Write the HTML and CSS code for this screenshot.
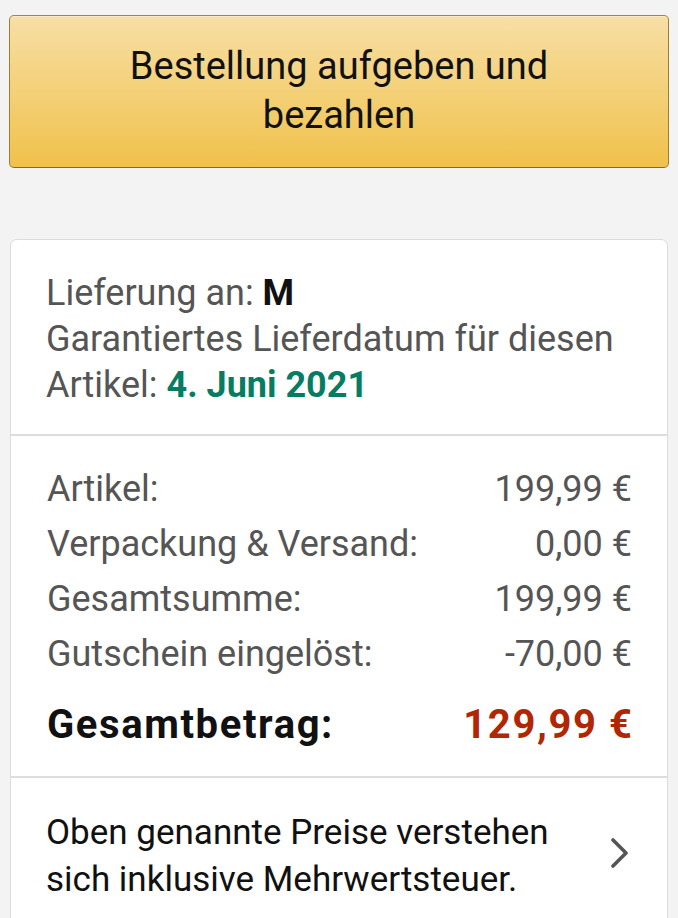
FILE: index.html
```html
<!DOCTYPE html>
<html lang="de">
<head>
<meta charset="utf-8">
<title>Bestellung</title>
<link rel="stylesheet" href="styles.css">
</head>
<body>
<main class="page">
  <button class="place-order" type="button">Bestellung aufgeben und bezahlen</button>

  <section class="card">
    <div class="delivery">
      <p class="line">Lieferung an: <strong class="name">M</strong></p>
      <p class="line">Garantiertes Lieferdatum für diesen Artikel: <strong class="date">4. Juni 2021</strong></p>
    </div>

    <div class="summary">
      <div class="row"><span>Artikel:</span><span>199,99 €</span></div>
      <div class="row"><span>Verpackung &amp; Versand:</span><span>0,00 €</span></div>
      <div class="row"><span>Gesamtsumme:</span><span>199,99 €</span></div>
      <div class="row"><span>Gutschein eingelöst:</span><span>-70,00 €</span></div>
      <div class="row total"><span>Gesamtbetrag:</span><span class="price">129,99 €</span></div>
    </div>

    <a class="vat" href="#">
      <span class="vat-text">Oben genannte Preise verstehen sich inklusive Mehrwertsteuer.</span>
      <svg class="chevron" viewBox="0 0 20 30" width="20" height="30" aria-hidden="true">
        <polyline points="3,2 16,15 3,28" fill="none" stroke="#555" stroke-width="3.6" stroke-linecap="round" stroke-linejoin="round"/>
      </svg>
    </a>
  </section>
</main>
</body>
</html>
```

FILE: styles.css
```css
html, body {
  margin: 0;
  padding: 0;
  background: #f3f3f3;
}

body {
  font-family: Roboto, "Liberation Sans", Arial, sans-serif;
  color: #111;
}

.page {
  display: flex;
  flex-direction: column;
  padding: 15px 9px 0 9px;
}

.place-order {
  display: block;
  width: 100%;
  margin: 0;
  padding: 26px 80px 27px;
  border: 1px solid;
  border-color: #a88734 #9c7e31 #846a29;
  border-radius: 5px;
  background: linear-gradient(to bottom, #f7dfa5, #f0c14b);
  box-shadow: inset 0 1px 0 rgba(255, 255, 255, 0.4);
  font-family: Roboto, "Liberation Sans", Arial, sans-serif;
  font-size: 38px;
  line-height: 49px;
  color: #111;
  text-align: center;
}

.card {
  margin: 71px 1px 0 1px;
  background: #fff;
  border: 1px solid #dcdcdc;
  border-radius: 7px;
  overflow: hidden;
}

.delivery {
  padding: 30px 35px 26px 35px;
  border-bottom: 2px solid #dddddd;
  font-size: 36px;
  line-height: 46px;
  color: #555;
}

.line {
  margin: 0;
}

.name {
  color: #111;
  font-weight: 700;
}

.date {
  color: #067d62;
  font-weight: 700;
}

.summary {
  padding: 26px 35px 24px 36px;
  border-bottom: 2px solid #dddddd;
  font-size: 36px;
  line-height: 55px;
  color: #555;
}

.row {
  display: flex;
  justify-content: space-between;
}

.row.total {
  margin-top: 15px;
  font-size: 40px;
  font-weight: 700;
  letter-spacing: 1.6px;
  color: #111;
}

.price {
  color: #b12704;
  margin-right: -1.6px;
}

.vat {
  display: flex;
  align-items: center;
  gap: 24px;
  padding: 31px 37px 32px 35px;
  text-decoration: none;
  color: #111;
}

.vat-text {
  flex: 1;
  font-size: 35px;
  line-height: 47px;
}

.chevron {
  flex: none;
  display: block;
  margin-top: -6px;
}
```
